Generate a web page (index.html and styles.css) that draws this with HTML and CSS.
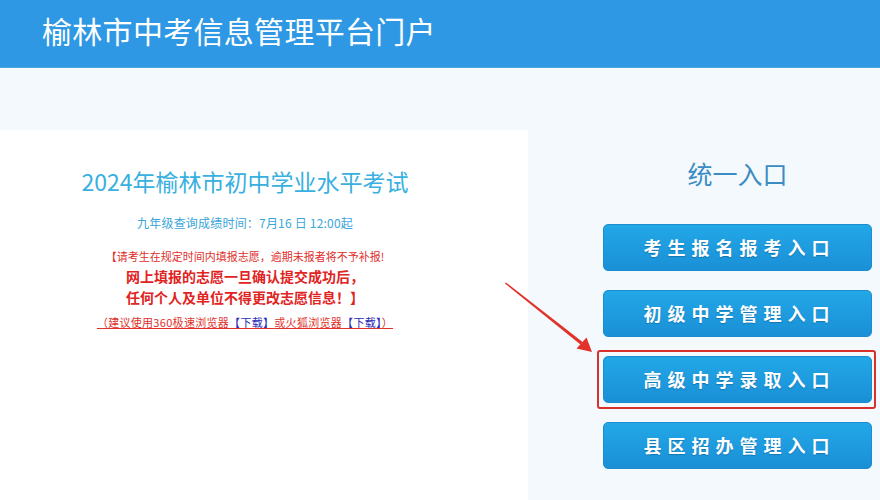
FILE: index.html
```html
<!DOCTYPE html>
<html lang="zh-CN">
<head>
<meta charset="utf-8">
<title>榆林市中考信息管理平台门户</title>
<link rel="stylesheet" href="styles.css">
</head>
<body>
<header class="topbar">
  <h1 class="site-title">榆林市中考信息管理平台门户</h1>
</header>
<main class="main">
  <section class="notice">
    <div class="notice-inner">
      <h2 class="exam-title">2024年榆林市初中学业水平考试</h2>
      <p class="query-time">九年级查询成绩时间：7月16 日 12:00起</p>
      <p class="warn-small">【请考生在规定时间内填报志愿，逾期未报者将不予补报!</p>
      <p class="warn-bold">网上填报的志愿一旦确认提交成功后，</p>
      <p class="warn-bold">任何个人及单位不得更改志愿信息！】</p>
      <p class="browser-tip">（建议使用360极速浏览器<span class="dl">【下载】</span>或火狐浏览器<span class="dl">【下载】</span>）</p>
    </div>
  </section>
  <section class="entry">
    <div class="entry-col">
      <h2 class="entry-title">统一入口</h2>
      <a class="entry-btn">考生报名报考入口</a>
      <a class="entry-btn">初级中学管理入口</a>
      <a class="entry-btn highlighted">高级中学录取入口<span class="hl-box"></span></a>
      <a class="entry-btn">县区招办管理入口</a>
    </div>
  </section>
  <svg class="arrow" width="880" height="432" viewBox="0 68 880 432" aria-hidden="true">
    <polygon points="505,283.5 506,282.5 582.6,342 580.4,344.6" fill="#e2332b"/>
    <polygon points="592,352 576.5,348.5 586.5,337.5" fill="#e2332b"/>
  </svg>
</main>
</body>
</html>
```

FILE: styles.css
```css
* { box-sizing: border-box; }
html, body { margin: 0; padding: 0; }
body {
  width: 880px;
  height: 500px;
  overflow: hidden;
  background: #f4f9fd;
  font-family: "Noto Sans CJK SC", "Noto Sans", sans-serif;
}
.topbar {
  height: 68px;
  background: #2e98e4;
  border-bottom: 1px solid #4aa6dc;
  padding: 10px 0 0 42px;
}
.site-title {
  margin: 0;
  font-size: 30px;
  line-height: 40px;
  font-weight: 400;
  color: #ffffff;
  letter-spacing: 0.3px;
}
.main {
  position: relative;
  display: flex;
  margin-top: 62px;
  height: 370px;
}
.notice {
  width: 528px;
  background: #ffffff;
}
.notice-inner {
  width: 490px;
  padding-top: 36px;
  text-align: center;
}
.exam-title {
  margin: 0;
  font-size: 23px;
  line-height: 30px;
  font-weight: 400;
  color: #38b0e0;
}
.query-time {
  margin: 18px 0 0;
  font-size: 12px;
  line-height: 18px;
  color: #3aa6d8;
  letter-spacing: 0.2px;
}
.warn-small {
  margin: 15px 0 0;
  font-size: 11px;
  line-height: 18px;
  color: #e0302c;
}
.warn-bold {
  margin: 0;
  font-size: 14px;
  line-height: 21px;
  font-weight: 700;
  color: #e0241f;
}
.warn-small + .warn-bold { margin-top: 1px; }
.browser-tip {
  display: inline-block;
  margin: 0;
  font-size: 11px;
  line-height: 18px;
  letter-spacing: 0.3px;
  color: #e0302c;
  text-decoration: underline;
  text-decoration-color: #e0302c;
}
.dl { color: #2a2ab8; }
.entry {
  width: 350px;
  margin-left: 2px;
}
.entry-col {
  width: 269px;
  margin-left: 73px;
  padding-top: 26px;
  display: flex;
  flex-direction: column;
  align-items: stretch;
  gap: 19px;
}
.entry-title {
  margin: 0 0 15px;
  font-size: 25px;
  line-height: 34px;
  font-weight: 400;
  color: #3b8cc2;
  text-align: center;
}
.entry-btn {
  position: relative;
  display: block;
  height: 47px;
  border-radius: 5px;
  background: linear-gradient(#22a7e7, #1a90d6);
  border: 1px solid #1c8ccf;
  color: #ffffff;
  font-size: 18px;
  line-height: 45px;
  font-weight: 700;
  letter-spacing: 6px;
  text-indent: 4px;
  text-align: center;
  text-shadow: 0 1px 1px rgba(0, 60, 110, 0.35);
}
.hl-box {
  position: absolute;
  top: -7px;
  left: -7px;
  right: -5px;
  bottom: -7px;
  border: 2px solid #d8312c;
  border-radius: 3px;
}
.arrow {
  position: absolute;
  left: 0;
  top: -62px;
  pointer-events: none;
}
```
